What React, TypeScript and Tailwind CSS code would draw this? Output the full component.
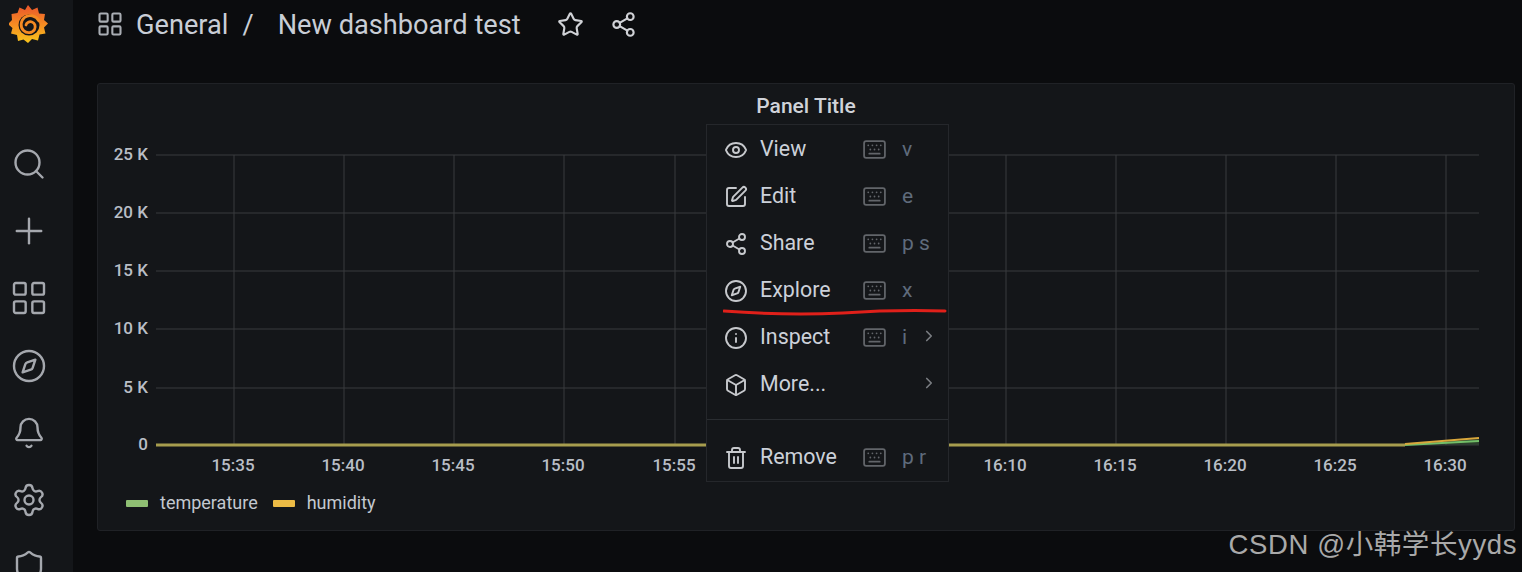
import {
  Bell,
  Box,
  ChevronRight,
  Compass,
  Eye,
  Info,
  Keyboard,
  LayoutGrid,
  Plus,
  Search,
  Settings,
  Share2,
  Shield,
  SquarePen,
  Star,
  Trash2,
  type LucideIcon,
} from "lucide-react";

const navIcons: { icon: LucideIcon; size: number }[] = [
  { icon: Search, size: 36 },
  { icon: Plus, size: 42 },
  { icon: LayoutGrid, size: 40 },
  { icon: Compass, size: 36 },
  { icon: Bell, size: 34 },
  { icon: Settings, size: 36 },
  { icon: Shield, size: 36 },
];

const yTicks = [
  { label: "25 K", y: 154 },
  { label: "20 K", y: 212 },
  { label: "15 K", y: 270 },
  { label: "10 K", y: 328 },
  { label: "5 K", y: 387 },
  { label: "0", y: 444 },
];

// 16:00 and 16:05 sit behind the open menu
const xTicks = [
  { label: "15:35", x: 234 },
  { label: "15:40", x: 344 },
  { label: "15:45", x: 454 },
  { label: "15:50", x: 564 },
  { label: "15:55", x: 675 },
  { label: "16:10", x: 1006 },
  { label: "16:15", x: 1116 },
  { label: "16:20", x: 1226 },
  { label: "16:25", x: 1336 },
  { label: "16:30", x: 1446 },
];

type MenuItem = { label: string; icon: LucideIcon; keys?: string; sub?: boolean };

const topItems: MenuItem[] = [
  { label: "View", icon: Eye, keys: "v" },
  { label: "Edit", icon: SquarePen, keys: "e" },
  { label: "Share", icon: Share2, keys: "p s" },
  { label: "Explore", icon: Compass, keys: "x" },
  { label: "Inspect", icon: Info, keys: "i", sub: true },
  { label: "More...", icon: Box, sub: true },
];

function GrafanaLogo() {
  return (
    <svg width="40" height="40" viewBox="0 0 40 40" fill="none">
      <defs>
        <linearGradient id="grafana-fill" x1="0" y1="1" x2="0" y2="0">
          <stop offset="0" stopColor="#f9c51b" />
          <stop offset="0.500" stopColor="#f58a23" />
          <stop offset="1" stopColor="#e9552b" />
        </linearGradient>
      </defs>
      <path
        d="M19 1l4 5 5.500-2.500 1.500 6 6 .5-1 6 4 3.500-4 4 1.500 6-6 1-1.500 6-6-1.500-4 4-4.500-3.500-5.500 1.500-1-6-6-1.500 1.500-5.500-4.500-4 4-4-.5-6 6-1 2-5.500 5.500 2.500z"
        fill="url(#grafana-fill)"
      />
      <circle cx="20" cy="21" r="10.500" fill="#141619" />
      <path
        d="M30 17c-3-5.500-10-7-14.500-3.500-4 3.500-4.500 9.500-1 13 3.500 3.500 9 2.500 11-1 1.500-3 .5-6.500-2.500-7.500-2.500-1-5.500 .5-6 3"
        stroke="#f58a23"
        strokeWidth="2.800"
        strokeLinecap="round"
      />
    </svg>
  );
}

function MenuRow({ item }: { item: MenuItem }) {
  const Icon = item.icon;
  return (
    <div className="flex h-[47px] items-center pl-[17px]">
      <Icon size={24} strokeWidth={1.900} className="shrink-0 text-[#c7c9cd]" />
      <span className="ml-[12px] w-[102px] shrink-0 text-[21.400px] text-[#ccd1d9]">{item.label}</span>
      <span className="w-[40px] shrink-0">
        {item.keys && <Keyboard size={25} strokeWidth={1.700} className="text-[#62656a]" />}
      </span>
      <span className="w-[18px] shrink-0 text-[21px] whitespace-nowrap text-[#5f6b7c]">{item.keys}</span>
      {item.sub && <ChevronRight size={18} strokeWidth={2.200} className="-mt-[4px] shrink-0 text-[#7a7d82]" />}
    </div>
  );
}

export default function App() {
  return (
    <div className="relative flex h-[572px] w-[1522px] overflow-hidden bg-[#0b0c0e] font-['Roboto',sans-serif]">
      <aside className="flex w-[73px] shrink-0 flex-col items-start bg-[#141619]">
        <div className="mt-[4px] ml-[9px]">
          <GrafanaLogo />
        </div>
        <nav className="mt-[86px] flex w-[58px] flex-col items-center">
          {navIcons.map(({ icon: Icon, size }, i) => (
            <span key={i} className="flex h-[67.300px] items-center justify-center">
              <Icon size={size} strokeWidth={(36 / size) * 1.600} className="text-[#a5a8ae]" />
            </span>
          ))}
        </nav>
      </aside>

      <main className="flex min-w-0 flex-1 flex-col pl-[24px] pr-[7px]">
        <header className="flex h-[48px] items-center text-[#c9ced6]">
          <LayoutGrid size={28} strokeWidth={1.800} className="-ml-[1px] text-[#a9adb3]" />
          <span className="mt-[2px] ml-[12px] text-[27.200px]">General</span>
          <span className="mt-[2px] ml-[14px] text-[27.200px]">/</span>
          <span className="mt-[2px] ml-[24px] text-[27.200px]">New dashboard test</span>
          <Star size={27} strokeWidth={1.900} className="ml-[36px] text-[#d0d2d6]" />
          <Share2 size={27} strokeWidth={1.900} className="ml-[26px] text-[#d0d2d6]" />
        </header>

        <section className="relative mt-[35px] h-[448px] rounded-[3px] border border-[#202226] bg-[#141619]">
          <h2 className="mt-[9px] text-center text-[21px] leading-[26px] font-medium text-[#d0d3d9]">Panel Title</h2>

          <svg width="1416" height="350" viewBox="98 129 1416 350" className="mt-[11px]">
            {yTicks.map((t) => (
              <g key={t.label}>
                <line x1="156" x2="1479" y1={t.y} y2={t.y} stroke="#393b3f" />
                <text x="148" y={t.y + 5} textAnchor="end" fontSize="17" fontWeight="500" fill="#b9bec6">
                  {t.label}
                </text>
              </g>
            ))}
            {xTicks.map((t) => (
              <g key={t.label}>
                <line x1={t.x} x2={t.x} y1="154" y2="444" stroke="#393b3f" />
                <text x={t.x - 1} y="470" textAnchor="middle" fontSize="17" fontWeight="500" fill="#b9bec6">
                  {t.label}
                </text>
              </g>
            ))}
            <path d="M1405 443.500L1479 438V443.500Z" fill="#73bf69" fillOpacity="0.25" />
            <line x1="156" x2="1405" y1="444" y2="444" stroke="#a79d4e" strokeWidth="3" />
            <path d="M1405 444L1479 440" stroke="#73bf69" strokeWidth="2" />
            <path d="M1405 443L1479 437" stroke="#d8a73c" strokeWidth="2" />
          </svg>

          <div className="mt-[11px] ml-[28px] flex items-center text-[18px] leading-[24px] text-[#c3c8d0]">
            <span className="h-[7px] w-[22px] rounded-[1px] bg-[#8fbf73]" />
            <span className="ml-[12px]">temperature</span>
            <span className="ml-[15px] h-[7px] w-[22px] rounded-[1px] bg-[#ecbb45]" />
            <span className="ml-[12px]">humidity</span>
          </div>

          <div className="absolute top-[40px] left-[608px] h-[358px] w-[243px] border border-[#25272b] bg-[#141619] py-[1px]">
            {topItems.map((item) => (
              <MenuRow key={item.label} item={item} />
            ))}
            <div className="mt-[11px] border-t border-[#2a2d31]" />
            <div className="mt-[14px]">
              <MenuRow item={{ label: "Remove", icon: Trash2, keys: "p r" }} />
            </div>
          </div>

          <svg
            width="226"
            height="12"
            viewBox="0 0 226 12"
            fill="none"
            className="absolute top-[224px] left-[625px]"
          >
            <path
              d="M1 3C40 6 80 7 120 5C150 3 190 2 222 3"
              stroke="#e0201a"
              strokeWidth="3"
              strokeLinecap="round"
            />
          </svg>
        </section>
      </main>

      <span className="absolute right-[5px] bottom-[7px] font-['Liberation_Sans','Noto_Sans_CJK_SC',sans-serif] text-[27.500px] leading-[40px] tracking-[0.600px] text-[#a9a9a9]">
        CSDN @小韩学长yyds
      </span>
    </div>
  );
}
